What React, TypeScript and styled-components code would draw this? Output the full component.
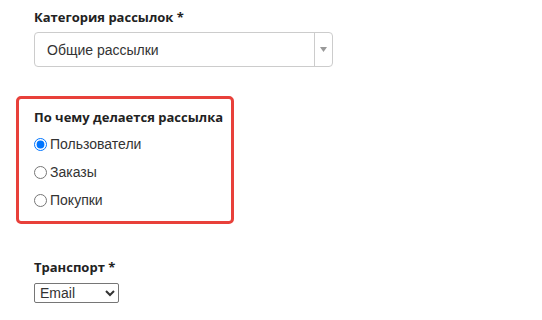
import React from "react";
import styled, { createGlobalStyle } from "styled-components";

const GlobalStyle = createGlobalStyle`
  body {
    margin: 0;
    background: #fff;
    font-family: "Liberation Sans", Arial, sans-serif;
    color: #333;
  }
`;

export default function App() {
  return (
    <Page>
      <GlobalStyle />
      <Field>
        <Label>Категория рассылок *</Label>
        <FakeSelect>
          <SelectValue>Общие рассылки</SelectValue>
          <SelectArrow>
            <svg width="7" height="5" viewBox="0 0 7 5">
              <path d="M0 0h7L3.5 5z" fill="#999" />
            </svg>
          </SelectArrow>
        </FakeSelect>
      </Field>

      <Highlight>
        <Label>По чему делается рассылка</Label>
        <RadioList>
          <RadioRow>
            <Radio type="radio" name="target" defaultChecked />
            Пользователи
          </RadioRow>
          <RadioRow>
            <Radio type="radio" name="target" />
            Заказы
          </RadioRow>
          <RadioRow>
            <Radio type="radio" name="target" />
            Покупки
          </RadioRow>
        </RadioList>
      </Highlight>

      <Transport>
        <Label>Транспорт *</Label>
        <NativeSelect defaultValue="email">
          <option value="email">Email</option>
          <option value="sms">SMS</option>
        </NativeSelect>
      </Transport>
    </Page>
  );
}

const Page = styled.div`
  padding: 9px 0 0 34px;
  display: flex;
  flex-direction: column;
  align-items: flex-start;
`;

const Field = styled.div`
  display: flex;
  flex-direction: column;
  gap: 7px;
`;

const Label = styled.div`
  font-family: "Open Sans", "Liberation Sans", sans-serif;
  font-weight: 700;
  font-size: 13px;
  line-height: 16px;
  color: #222;
`;

const FakeSelect = styled.div`
  width: 297px;
  height: 33px;
  border: 1px solid #ccc;
  border-radius: 4px;
  display: flex;
  align-items: stretch;
  box-sizing: content-box;
`;

const SelectValue = styled.div`
  flex: 1;
  display: flex;
  align-items: center;
  padding-left: 12px;
  font-size: 14px;
  color: #333;
`;

const SelectArrow = styled.div`
  width: 17px;
  border-left: 1px solid #ccc;
  display: flex;
  align-items: center;
  justify-content: center;
`;

const Highlight = styled.div`
  margin: 29px 0 0 -18px;
  width: 197px;
  border: 3px solid #e8403a;
  border-radius: 5px;
  padding: 10px 0 7px 15px;
`;

const RadioList = styled.div`
  margin-top: 5px;
  display: flex;
  flex-direction: column;
`;

const RadioRow = styled.label`
  height: 28px;
  display: flex;
  align-items: center;
  font-size: 14px;
  color: #333;
`;

const Radio = styled.input`
  width: 13px;
  height: 13px;
  margin: 0 3px 0 0;
`;

const Transport = styled.div`
  margin-top: 35px;
  display: flex;
  flex-direction: column;
  gap: 8px;
`;

const NativeSelect = styled.select`
  width: 85px;
  height: 20px;
  font-family: "Liberation Sans", Arial, sans-serif;
  font-size: 14px;
  color: #333;
  border: 1px solid #767676;
  border-radius: 2px;
  background: #fff;
  padding: 0 0 0 1px;
`;
